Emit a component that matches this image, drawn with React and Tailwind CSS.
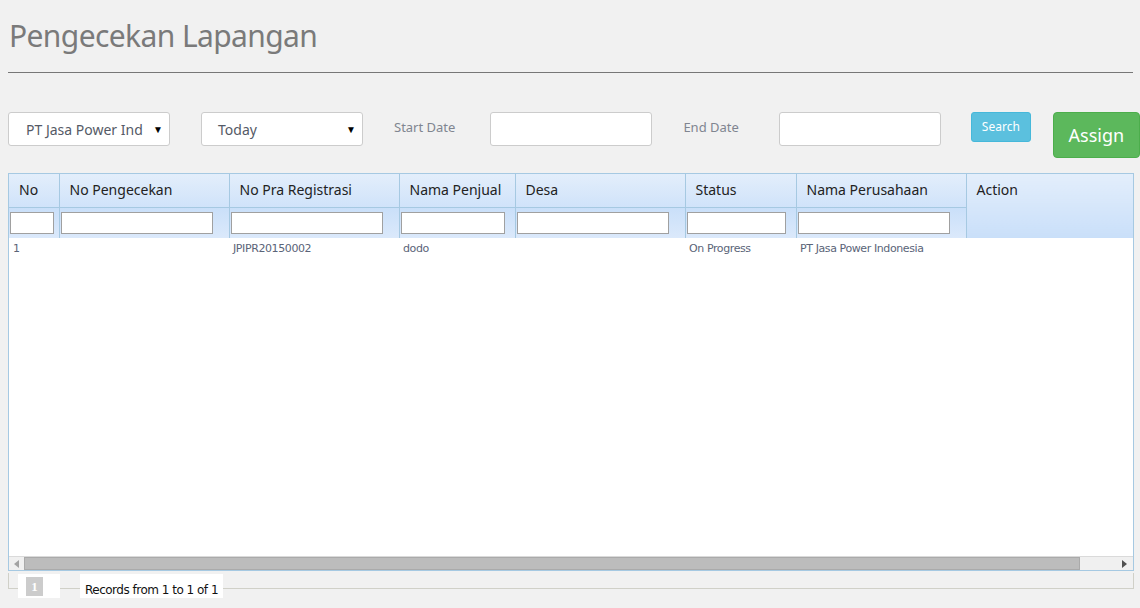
import React from 'react';

const columns = [
  { label: 'No', width: 50, filter: 44 },
  { label: 'No Pengecekan', width: 170, filter: 152 },
  { label: 'No Pra Registrasi', width: 170, filter: 152 },
  { label: 'Nama Penjual', width: 116, filter: 104 },
  { label: 'Desa', width: 170, filter: 152 },
  { label: 'Status', width: 111, filter: 99 },
  { label: 'Nama Perusahaan', width: 170, filter: 152 },
  { label: 'Action', width: 167, filter: 0 },
];

const rows = [
  ['1', '', 'JPIPR20150002', 'dodo', '', 'On Progress', 'PT Jasa Power Indonesia', ''],
];

const Field = ({ className = '', children }) => (
  <div className={`h-[34px] w-[162px] bg-white border border-[#cccccc] rounded-[3px] flex items-center ${className}`}>
    {children}
  </div>
);

export default function App() {
  return (
    <div className="min-h-[608px] w-[1140px] bg-[#f1f1f1] font-['Noto_Sans',sans-serif] overflow-hidden">
      {/* Header */}
      <div className="px-[8px] pt-[14px]">
        <h1 className="pl-[1px] text-[30px] leading-[44px] text-[#7a7a7a] tracking-[-0.6px]">Pengecekan Lapangan</h1>
        <div className="mt-[14px] w-[1125px] h-px bg-[#777777]" />
      </div>

      {/* Filters */}
      <div className="flex items-start pl-[8px] mt-[39px] h-[61px]">
        <Field>
          <span className="pl-[17px] text-[14px] text-[#555a66] flex-1">PT Jasa Power Ind</span>
          <span className="pr-[6px] text-[10px] text-black">▼</span>
        </Field>
        <Field className="ml-[31px]">
          <span className="pl-[16px] text-[14px] text-[#555a66] flex-1">Today</span>
          <span className="pr-[6px] text-[10px] text-black">▼</span>
        </Field>
        <span className="ml-[31px] mt-[6px] text-[13px] text-[#808590]">Start Date</span>
        <Field className="ml-[35px]" />
        <span className="ml-[31px] mt-[6px] text-[13px] text-[#808590]">End Date</span>
        <Field className="ml-[40px]" />
        <button className="ml-[30px] w-[60px] h-[30px] rounded-[3px] bg-[#5bc0de] border border-[#46b8da] text-white text-[12px] leading-none">
          Search
        </button>
        <button className="ml-[22px] w-[87px] h-[46px] rounded-[4px] bg-[#5cb85c] border border-[#4cae4c] text-white text-[18px] leading-none">
          Assign
        </button>
      </div>

      {/* Grid */}
      <div className="ml-[8px] w-[1126px] h-[398px] border border-[#a6c9e2] bg-white flex flex-col">
        <div className="flex-1 overflow-hidden">
          <table className="border-collapse table-fixed" style={{ width: 1124 }}>
            <colgroup>
              {columns.map((c) => (
                <col key={c.label} style={{ width: c.width }} />
              ))}
            </colgroup>
            <thead>
              <tr className="h-[33px] bg-[linear-gradient(#e3eefb,#d0e3fa)]">
                {columns.map((c) => (
                  <th
                    key={c.label}
                    rowSpan={c.filter ? 1 : 2}
                    className={`border-r border-b border-[#a6c9e2] pl-[10px] text-left align-top pt-[5px] text-[14px] font-normal text-[#222222] whitespace-nowrap ${c.filter ? '' : 'border-b-0 border-r-0 bg-[linear-gradient(#e3eefb,#c9dff9)]'}`}
                  >
                    {c.label}
                  </th>
                ))}
              </tr>
              <tr className="h-[31px] bg-[linear-gradient(#c9dff9,#dbe9fb)]">
                {columns.filter((c) => c.filter).map((c) => (
                  <th key={c.label} className="border-r border-[#a6c9e2] px-[1px] text-left align-top pt-[4px] font-normal">
                    <input
                      className="block h-[22px] bg-white border border-[#a0a0a0] outline-none"
                      style={{ width: c.filter }}
                    />
                  </th>
                ))}
              </tr>
            </thead>
            <tbody>
              {rows.map((r, ri) => (
                <tr key={ri} className="h-[23px]">
                  {r.map((v, ci) => (
                    <td key={ci} className="pl-[4px] text-[11px] text-[#5a6478] font-['DejaVu_Sans',sans-serif] tracking-[-0.4px] whitespace-nowrap align-middle">
                      {v}
                    </td>
                  ))}
                </tr>
              ))}
            </tbody>
          </table>
        </div>

        {/* Horizontal scrollbar */}
        <div className="h-[14px] flex items-stretch bg-[#f0f0f0] border-t border-[#dadada]">
          <div className="w-[15px] flex items-center justify-center">
            <svg width="5" height="8" viewBox="0 0 5 8"><path d="M5 0 L0 4 L5 8 Z" fill="#a3a3a3" /></svg>
          </div>
          <div className="w-[1056px] bg-[#bcbcbc] border border-[#aaaaaa]" />
          <div className="flex-1 flex items-center justify-end pr-[6px]">
            <svg width="5" height="8" viewBox="0 0 5 8"><path d="M0 0 L5 4 L0 8 Z" fill="#505050" /></svg>
          </div>
        </div>
      </div>

      {/* Pager */}
      <div className="ml-[8px] mt-[2px] w-[1126px] h-[16px] border-x border-b border-[#d0d0c8]">
        <div className="flex items-start pt-[1px]">
          <div className="ml-[9px] w-[42px] h-[24px] bg-white flex items-start pl-[8px] pt-[3px]">
            <span className="w-[17px] h-[19px] bg-[#cccccc] text-white text-[13px] font-bold leading-[19px] text-center font-['Liberation_Serif',serif]">1</span>
          </div>
          <div className="ml-[20px] h-[24px] bg-white px-[5px] pt-[9px] text-[12px] leading-[14px] text-[#111111] font-['DejaVu_Sans',sans-serif] tracking-[-0.5px]">
            Records from 1 to 1 of 1
          </div>
        </div>
      </div>
    </div>
  );
}
